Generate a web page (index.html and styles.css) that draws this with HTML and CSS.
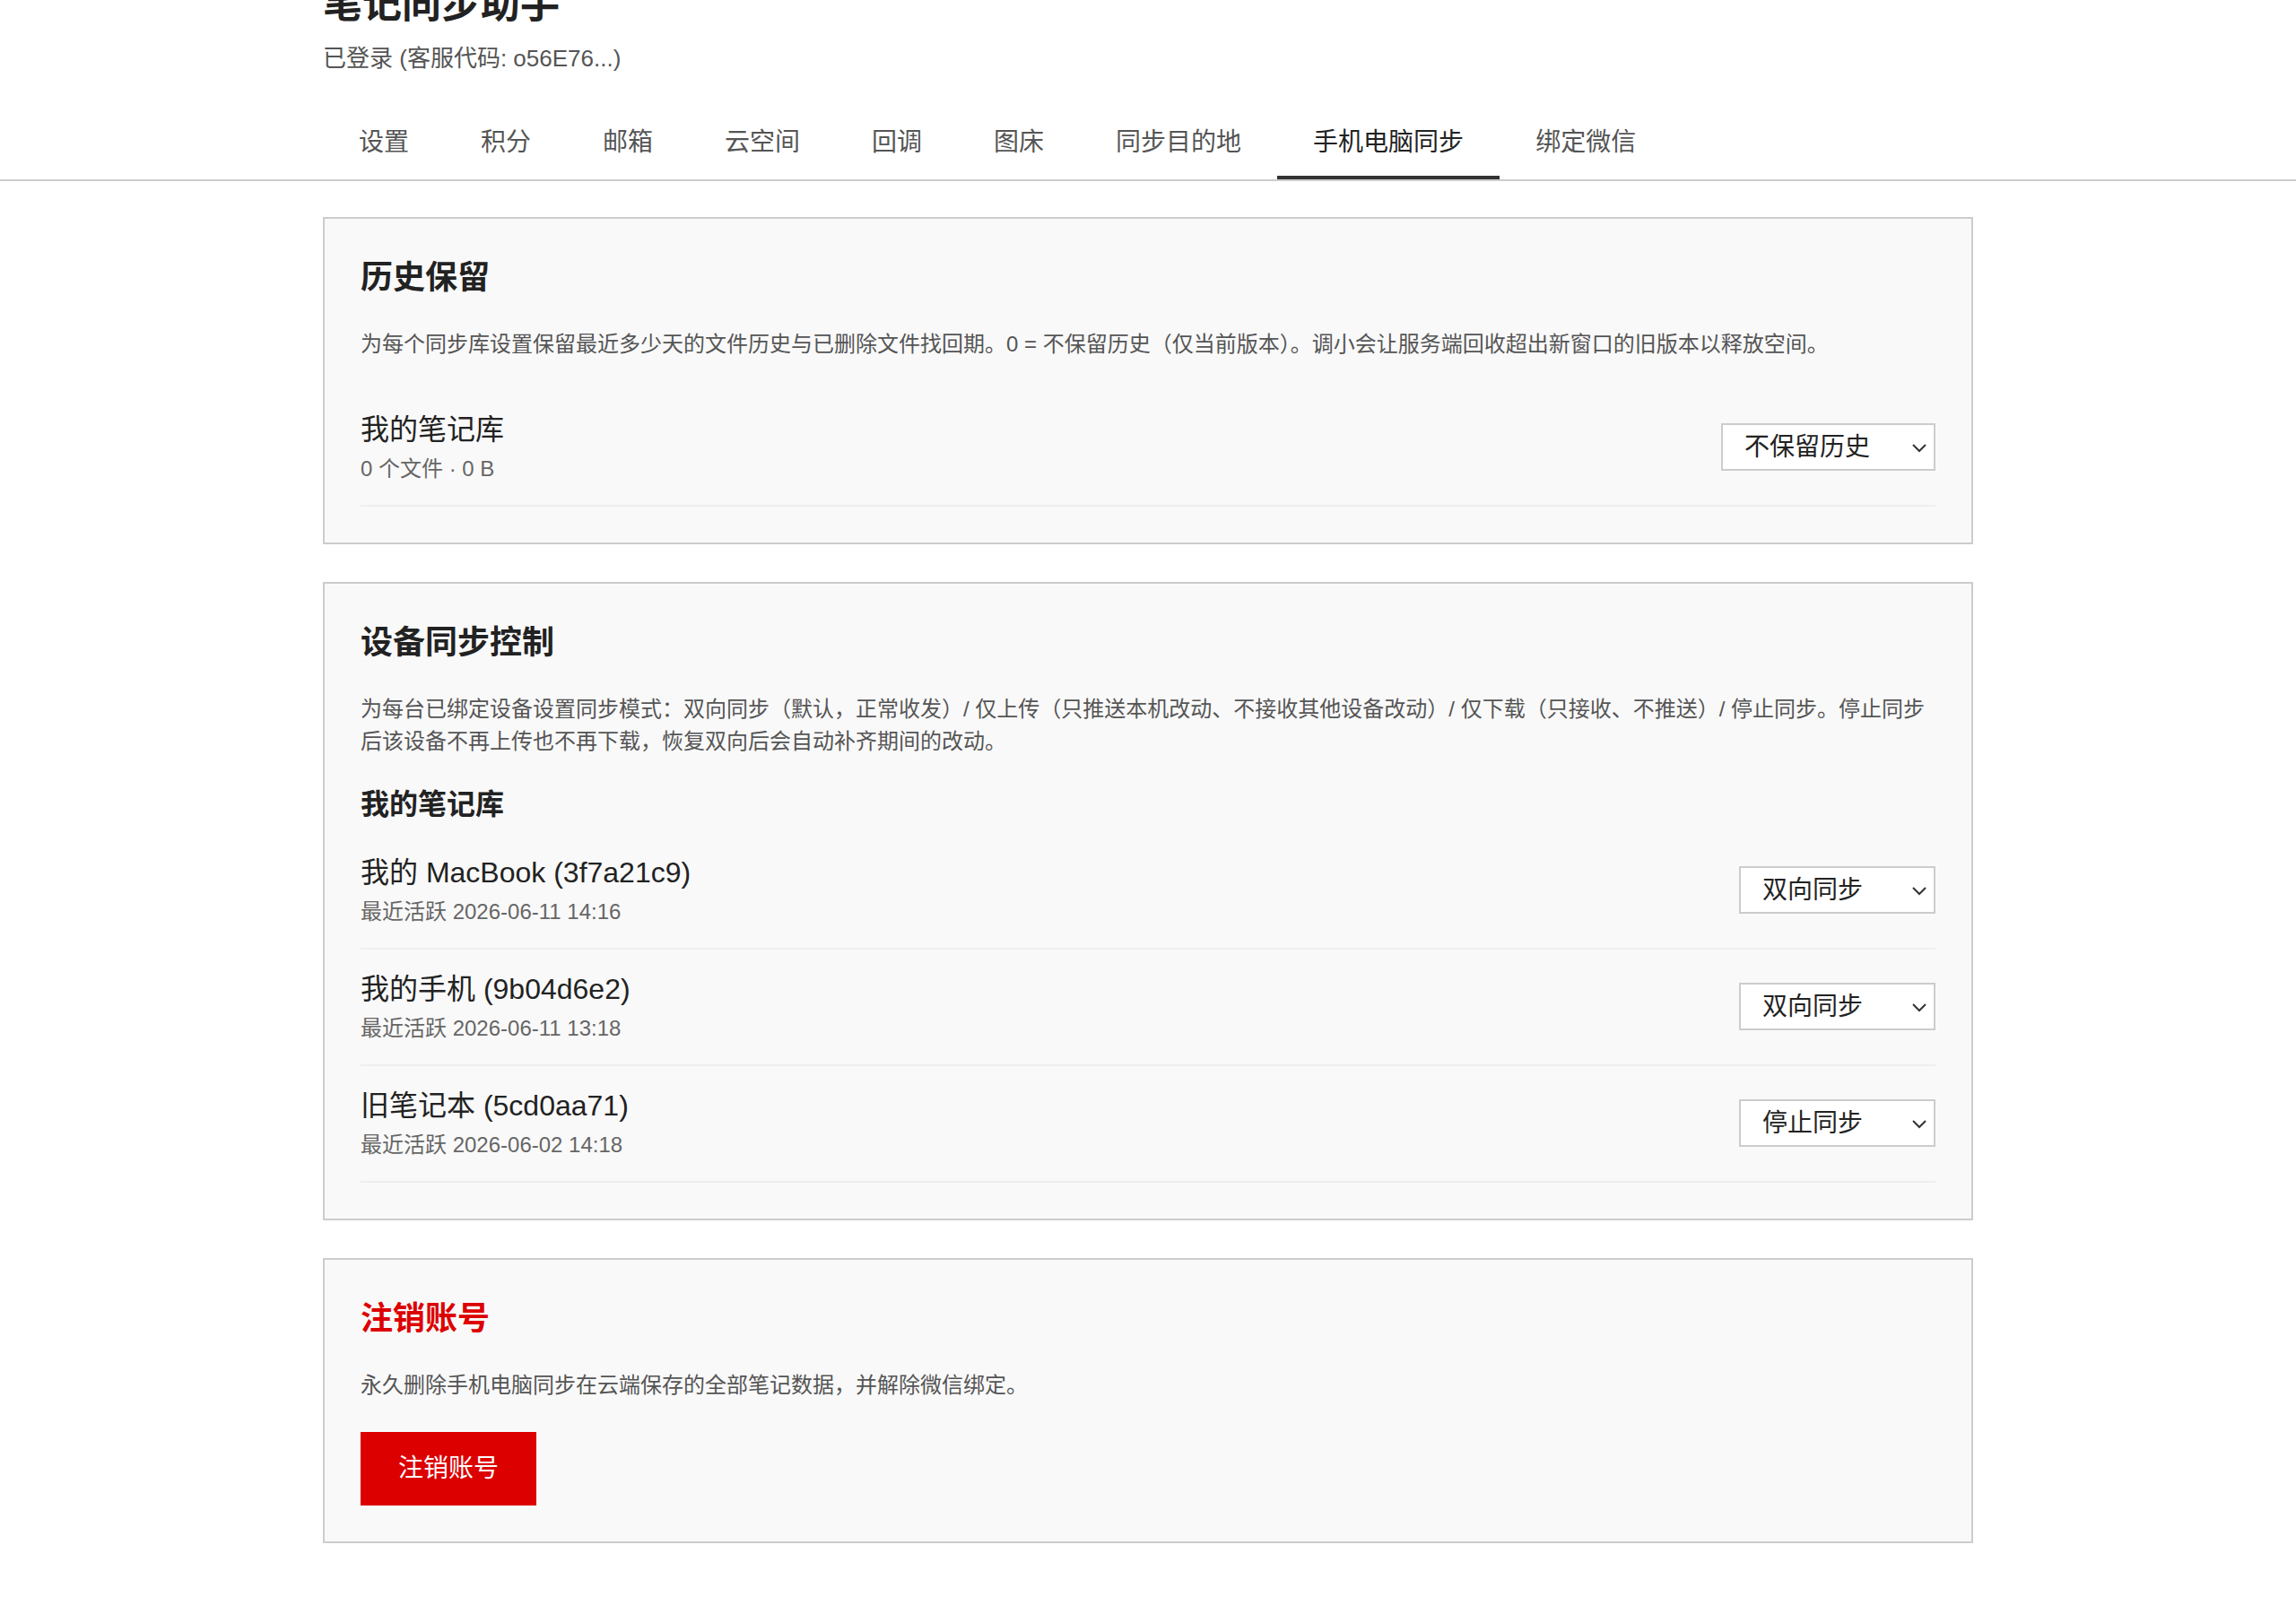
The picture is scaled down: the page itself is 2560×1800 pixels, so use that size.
FILE: index.html
```html
<!DOCTYPE html>
<html lang="zh-CN">
<head>
<meta charset="utf-8">
<title>笔记同步助手</title>
<link rel="stylesheet" href="styles.css">
</head>
<body>
<header class="app-header">
  <div class="container">
    <h1 class="app-title">笔记同步助手</h1>
    <p class="app-sub">已登录 (客服代码: o56E76...)</p>
  </div>
</header>
<nav class="tabs">
  <div class="container tabs-inner">
    <a class="tab">设置</a>
    <a class="tab">积分</a>
    <a class="tab">邮箱</a>
    <a class="tab">云空间</a>
    <a class="tab">回调</a>
    <a class="tab">图床</a>
    <a class="tab">同步目的地</a>
    <a class="tab active">手机电脑同步</a>
    <a class="tab">绑定微信</a>
  </div>
</nav>
<main class="container">
  <section class="card">
    <h2 class="card-title">历史保留</h2>
    <p class="card-desc">为每个同步库设置保留最近多少天的文件历史与已删除文件找回期。0 = 不保留历史（仅当前版本）。调小会让服务端回收超出新窗口的旧版本以释放空间。</p>
    <div class="row">
      <div class="row-info">
        <div class="row-name">我的笔记库</div>
        <div class="row-meta">0 个文件 · 0 B</div>
      </div>
      <span class="select-wrap">
        <select class="select select-wide">
          <option>不保留历史</option>
          <option>保留 7 天</option>
          <option>保留 30 天</option>
        </select>
        <svg class="chev" width="18" height="11" viewBox="0 0 18 11"><path d="M2 2 L9 9 L16 2" fill="none" stroke="#333" stroke-width="2"/></svg>
      </span>
    </div>
  </section>

  <section class="card">
    <h2 class="card-title">设备同步控制</h2>
    <p class="card-desc">为每台已绑定设备设置同步模式：双向同步（默认，正常收发）/ 仅上传（只推送本机改动、不接收其他设备改动）/ 仅下载（只接收、不推送）/ 停止同步。停止同步后该设备不再上传也不再下载，恢复双向后会自动补齐期间的改动。</p>
    <h3 class="group-title">我的笔记库</h3>
    <div class="row">
      <div class="row-info">
        <div class="row-name">我的 MacBook (3f7a21c9)</div>
        <div class="row-meta">最近活跃 2026-06-11 14:16</div>
      </div>
      <span class="select-wrap">
        <select class="select">
          <option selected>双向同步</option>
          <option>仅上传</option>
          <option>仅下载</option>
          <option>停止同步</option>
        </select>
        <svg class="chev" width="18" height="11" viewBox="0 0 18 11"><path d="M2 2 L9 9 L16 2" fill="none" stroke="#333" stroke-width="2"/></svg>
      </span>
    </div>
    <div class="row">
      <div class="row-info">
        <div class="row-name">我的手机 (9b04d6e2)</div>
        <div class="row-meta">最近活跃 2026-06-11 13:18</div>
      </div>
      <span class="select-wrap">
        <select class="select">
          <option selected>双向同步</option>
          <option>仅上传</option>
          <option>仅下载</option>
          <option>停止同步</option>
        </select>
        <svg class="chev" width="18" height="11" viewBox="0 0 18 11"><path d="M2 2 L9 9 L16 2" fill="none" stroke="#333" stroke-width="2"/></svg>
      </span>
    </div>
    <div class="row">
      <div class="row-info">
        <div class="row-name">旧笔记本 (5cd0aa71)</div>
        <div class="row-meta">最近活跃 2026-06-02 14:18</div>
      </div>
      <span class="select-wrap">
        <select class="select">
          <option>双向同步</option>
          <option>仅上传</option>
          <option>仅下载</option>
          <option selected>停止同步</option>
        </select>
        <svg class="chev" width="18" height="11" viewBox="0 0 18 11"><path d="M2 2 L9 9 L16 2" fill="none" stroke="#333" stroke-width="2"/></svg>
      </span>
    </div>
  </section>

  <section class="card">
    <h2 class="card-title danger">注销账号</h2>
    <p class="card-desc">永久删除手机电脑同步在云端保存的全部笔记数据，并解除微信绑定。</p>
    <button class="btn-danger">注销账号</button>
  </section>
</main>
</body>
</html>
```
FILE: styles.css
```css
* { box-sizing: border-box; }

html, body {
  margin: 0;
  padding: 0;
  background: #ffffff;
  font-family: "Liberation Sans", "Noto Sans CJK SC", sans-serif;
  color: #222;
}

.container {
  width: 1840px;
  margin: 0 auto;
}

.app-title {
  margin: -21px 0 0;
  font-size: 44px;
  line-height: 52px;
  font-weight: bold;
  color: #222;
}

.app-sub {
  margin: 16px 0 0;
  font-size: 26px;
  line-height: 36px;
  color: #555;
}

.tabs {
  margin-top: 35px;
  border-bottom: 2px solid #cccccc;
}

.tabs-inner {
  display: flex;
}

.tab {
  display: block;
  padding: 24px 40px 20px;
  border-bottom: 4px solid transparent;
  font-size: 28px;
  line-height: 34px;
  color: #555;
  text-decoration: none;
}

.tab.active {
  color: #222;
  border-bottom-color: #333;
}

main.container {
  padding-top: 40px;
  padding-bottom: 80px;
}

.card {
  background: #f9f9f9;
  border: 2px solid #cccccc;
  padding: 40px;
  margin-bottom: 42px;
}

.card-title {
  margin: 0 0 30px;
  font-size: 36px;
  line-height: 52px;
  font-weight: bold;
  color: #222;
}

.card-title.danger {
  color: #dd0000;
}

.card-desc {
  margin: 0 0 32px;
  font-size: 24px;
  line-height: 36.5px;
  color: #555;
}

.group-title {
  margin: 6px 0 13px;
  font-size: 32px;
  line-height: 38px;
  font-weight: bold;
  color: #222;
}

.row {
  display: flex;
  justify-content: space-between;
  align-items: center;
  padding: 25px 0 22px;
  border-bottom: 2px solid #eeeeee;
}

.row-name {
  font-size: 32px;
  line-height: 38px;
  color: #222;
}

.row-meta {
  margin-top: 7px;
  font-size: 24px;
  line-height: 36px;
  color: #666;
}

.select-wrap {
  position: relative;
  display: inline-block;
  margin-top: -3px;
}

.select {
  -webkit-appearance: none;
  appearance: none;
  display: block;
  width: 219px;
  height: 53px;
  padding: 0 40px 0 24px;
  border: 2px solid #cccccc;
  border-radius: 0;
  background: #ffffff;
  font-family: "Liberation Sans", "Noto Sans CJK SC", sans-serif;
  font-size: 28px;
  line-height: 49px;
  color: #222;
  outline: none;
}

.select-wide {
  width: 239px;
}

.chev {
  position: absolute;
  right: 9px;
  top: 50%;
  margin-top: -5px;
  pointer-events: none;
}

.btn-danger {
  display: block;
  margin-top: 34px;
  padding: 24px 42px;
  border: none;
  border-radius: 0;
  background: #dd0000;
  color: #ffffff;
  font-family: "Liberation Sans", "Noto Sans CJK SC", sans-serif;
  font-size: 28px;
  line-height: 34px;
  cursor: pointer;
}
```
